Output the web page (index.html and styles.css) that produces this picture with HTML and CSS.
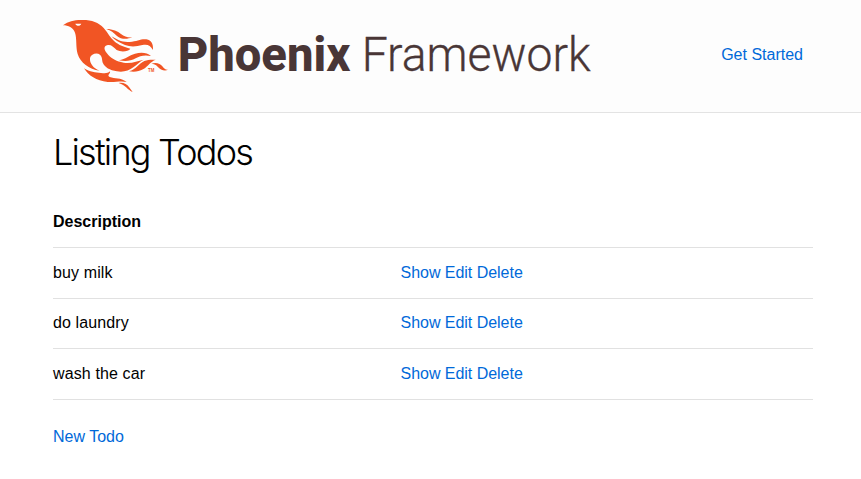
FILE: index.html
```html
<!DOCTYPE html>
<html lang="en">
<head>
<meta charset="utf-8">
<title>Phoenix Framework</title>
<link rel="stylesheet" href="styles.css">
</head>
<body>
<header class="header">
  <svg class="logo" viewBox="0 0 1635 270" role="img" aria-label="Phoenix Framework">
    <g class="bird">
      <path fill-rule="evenodd" d="M24 46C40 34 56 30 78 30C108 29 130 36 146 54C160 70 166 84 178 94C192 106 206 111 226 116C220 125 198 127 185 120C174 110 168 103 156 106C145 110 146 120 160 135C172 147 184 154 206 158C232 161 246 153 266 149C254 155 247 163 235 172C222 182 204 188 186 184C164 181 150 172 144 160C140 150 143 142 135 134C125 127 108 132 105 144C103 160 116 176 134 182C102 178 76 158 68 132C62 110 66 86 60 68C54 52 40 46 24 46ZM61 41C64 49 75 50 79 41Z"/>
      <path d="M154 57C174 57 188 64 198 72C208 80 218 83 231 82C216 89 198 88 186 78C176 68 168 62 154 57Z"/>
      <path d="M169 79C186 88 200 98 224 96C246 94 258 86 274 88C290 91 295 102 294 120C286 106 278 102 262 105C244 110 226 111 210 105C192 98 178 90 169 79Z"/>
      <path d="M192 151C212 147 222 136 240 131C258 126 276 127 288 138C268 134 254 138 242 145C226 154 210 155 192 151Z"/>
      <path d="M222 184C244 178 250 162 268 153C278 148 292 149 302 149C286 155 280 168 264 178C252 185 238 186 222 184Z"/>
      <path d="M289 161C304 156 316 161 322 169C328 177 332 180 339 179C330 184 316 180 308 170C302 163 296 162 289 161Z"/>
      <path d="M87 175C104 187 122 187 138 189C152 191 158 190 165 184C168 190 154 197 164 201C180 207 196 201 215 216C196 211 182 218 158 216C124 213 100 196 87 175Z"/>
      <path d="M191 219C206 217 216 223 222 231L233 246C218 240 212 226 191 219Z"/>
      <text class="mark" x="279" y="185" textLength="19" lengthAdjust="spacingAndGlyphs">TM</text>
    </g>
    <text class="word bold" x="368" y="182" textLength="518" lengthAdjust="spacingAndGlyphs">Phoenix</text>
    <text class="word thin" x="920" y="182" textLength="687" lengthAdjust="spacingAndGlyphs">Framework</text>
  </svg>
  <a class="start" href="#">Get Started</a>
</header>
<main class="container">
  <h1>Listing Todos</h1>
  <table>
    <thead><tr><th>Description</th><th></th></tr></thead>
    <tbody>
      <tr><td>buy milk</td><td><a href="#">Show</a> <a href="#">Edit</a> <a href="#">Delete</a></td></tr>
      <tr><td>do laundry</td><td><a href="#">Show</a> <a href="#">Edit</a> <a href="#">Delete</a></td></tr>
      <tr><td>wash the car</td><td><a href="#">Show</a> <a href="#">Edit</a> <a href="#">Delete</a></td></tr>
    </tbody>
  </table>
  <a class="new" href="#">New Todo</a>
</main>
</body>
</html>
```
FILE: styles.css
```css
* { box-sizing: border-box; }
body {
  margin: 0;
  background: #fff;
  color: #000;
  font: 300 16px/25.6px "Liberation Sans", Arial, sans-serif;
}
a { color: #0069d9; text-decoration: none; }
.header {
  display: flex;
  justify-content: space-between;
  height: 113px;
  padding: 10px 58px 0 55px;
  background: #fdfdfd;
  border-bottom: 1px solid #e3e3e3;
}
.logo { display: block; flex: none; width: 545px; height: 90px; overflow: visible; }
.bird { fill: #f15524; }
.mark { font: 700 14px "Liberation Sans", sans-serif; }
.word { fill: #493636; font-family: Roboto, sans-serif; font-size: 146px; }
.bold { font-weight: 800; }
.thin { font-weight: 300; stroke: #493636; stroke-width: 1px; }
.start { margin-top: 32px; }
.container { width: 760px; margin-left: 53px; }
h1 {
  margin: 0;
  padding-top: 18px;
  height: 84.45px;
  font: 300 36px/43px Inter, sans-serif;
  letter-spacing: -1.8px;
}
table { width: 100%; border-collapse: separate; border-spacing: 0; table-layout: fixed; }
th, td { height: 50.6px; padding: 11.8px 0 12.2px; border-bottom: 1px solid #e1e1e1; text-align: left; vertical-align: top; }
th:first-child { width: 347.5px; }
td:first-child { letter-spacing: 0.12px; }
td:last-child { letter-spacing: -0.03px; }
.new { display: inline-block; margin-top: 24.3px; }
```
